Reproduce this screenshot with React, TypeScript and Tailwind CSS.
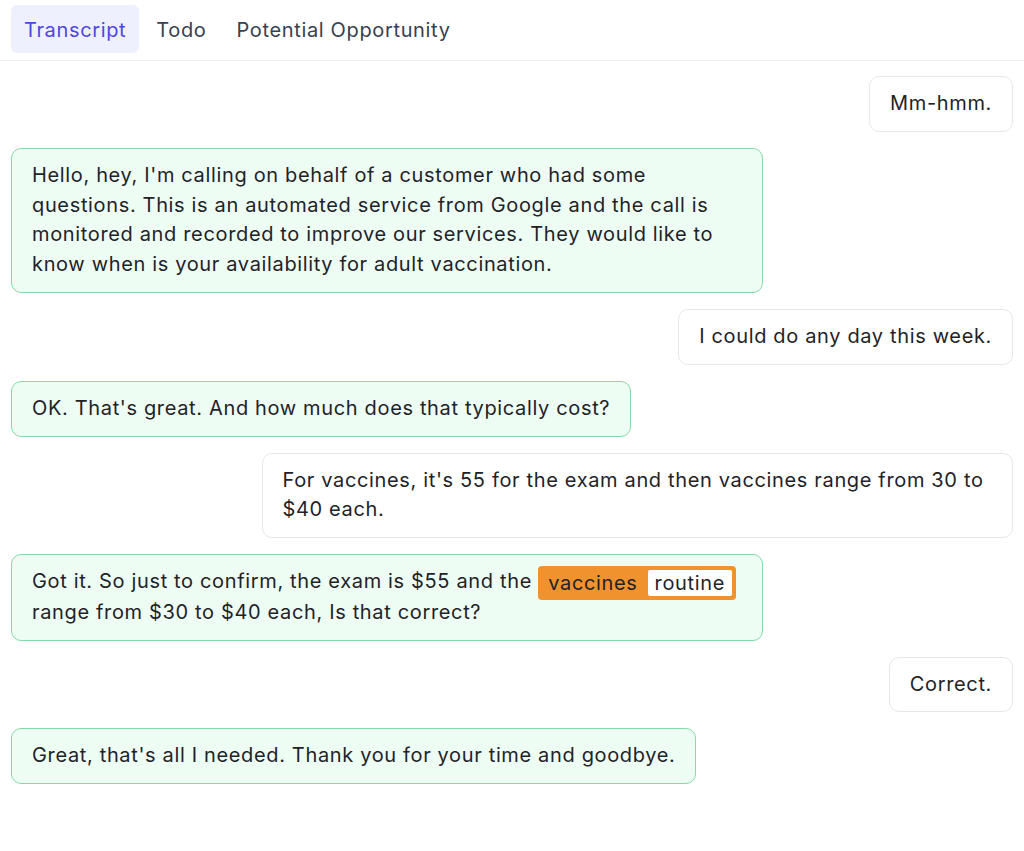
import React from "react";

type Msg = { side: "left" | "right"; text: React.ReactNode };

const Tag = () => (
  <span className="mr-[2px] -my-[2px] inline-flex items-center rounded-[4px] bg-[#f0922e] py-[4px] pr-[4px] align-middle leading-[26px]">
    <span className="px-[10px]">vaccines</span>
    <span className="rounded-[2px] bg-white px-[7px]">routine</span>
  </span>
);

const messages: Msg[] = [
  { side: "right", text: "Mm-hmm." },
  {
    side: "left",
    text: "Hello, hey, I'm calling on behalf of a customer who had some questions. This is an automated service from Google and the call is monitored and recorded to improve our services. They would like to know when is your availability for adult vaccination.",
  },
  { side: "right", text: "I could do any day this week." },
  { side: "left", text: "OK. That's great. And how much does that typically cost?" },
  {
    side: "right",
    text: "For vaccines, it's 55 for the exam and then vaccines range from 30 to $40 each.",
  },
  {
    side: "left",
    text: (
      <>
        Got it. So just to confirm, the exam is $55 and the <Tag /> range from $30 to $40 each, Is that correct?
      </>
    ),
  },
  { side: "right", text: "Correct." },
  { side: "left", text: "Great, that's all I needed. Thank you for your time and goodbye." },
];

export default function App() {
  return (
    <div
      className="min-h-screen bg-white text-[20px] tracking-[0.65px] text-[#1f2328]"
      style={{ fontFamily: "Inter, 'Noto Sans', sans-serif" }}
    >
      <div className="flex gap-[4px] border-b border-[#eeeeee] px-[11px] pt-[5px] pb-[7px]">
        <button className="h-12 rounded-[6px] bg-[#eef0fe] px-[13px] pt-[2px] leading-[30px] text-[#4f46e5]">
          Transcript
        </button>
        <button className="h-12 rounded-[6px] px-[13px] pt-[2px] leading-[30px] text-[#374151]">Todo</button>
        <button className="h-12 rounded-[6px] px-[13px] pt-[2px] leading-[30px] text-[#374151]">
          Potential Opportunity
        </button>
      </div>
      <div className="flex flex-col gap-4 px-[11px] pt-[15px]">
        {messages.map((m, i) => (
          <div key={i} className={m.side === "right" ? "flex justify-end" : "flex justify-start"}>
            <div
              className={
                m.side === "right"
                  ? "max-w-[75%] rounded-[10px] border border-[#e5e7eb] bg-white px-5 py-3 leading-[29.8px]"
                  : "max-w-[75%] rounded-[10px] border border-[#86d9a8] bg-[#edfdf4] px-5 py-3 leading-[29.8px]"
              }
            >
              {m.text}
            </div>
          </div>
        ))}
      </div>
    </div>
  );
}
